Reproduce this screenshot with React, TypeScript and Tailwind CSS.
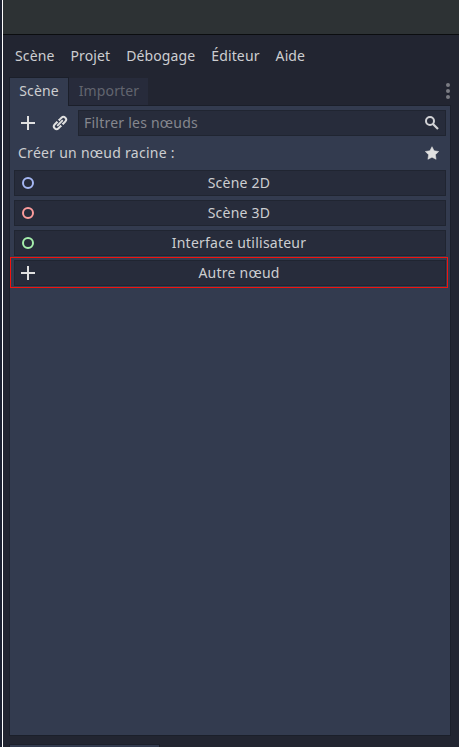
import React from "react";

const menus = ["Scène", "Projet", "Débogage", "Éditeur", "Aide"];

function Plus() {
  return (
    <svg width="16" height="16" viewBox="0 0 16 16" className="shrink-0">
      <path d="M7 1h2v6h6v2H9v6H7V9H1V7h6z" fill="#e0e0e0" />
    </svg>
  );
}

function Link() {
  return (
    <svg width="16" height="16" viewBox="0 0 16 16" className="shrink-0" fill="none" stroke="#e0e0e0" strokeWidth="2">
      <g transform="rotate(-45 8 8)">
        <path d="M6.6 10.7H3.2a2.7 2.7 0 0 1 0-5.4h3.4M9.4 5.3h3.4a2.7 2.7 0 0 1 0 5.4H9.4" />
        <path d="M6.6 4.3v2.2M6.6 9.5v2.2M9.4 4.3v2.2M9.4 9.5v2.2" strokeWidth="1" />
        <path d="M4.8 8h6.4" strokeLinecap="round" strokeWidth="1.8" />
      </g>
    </svg>
  );
}

function Search() {
  return (
    <svg width="16" height="16" viewBox="0 0 16 16" className="shrink-0" fill="none" stroke="#d2d3d6" strokeWidth="2">
      <circle cx="6" cy="6" r="4" />
      <path d="M9 9l5 5" strokeWidth="2.2" />
    </svg>
  );
}

function Star() {
  return (
    <svg width="16" height="16" viewBox="0 0 16 16" className="shrink-0">
      <path d="M8 1.7l2.1 4 4.6.8-3.3 3.2.7 4.6L8 12.3l-4.1 2 .7-4.6-3.3-3.2 4.6-.8z" fill="#e0e0e0" stroke="#e0e0e0" strokeWidth="0.5" strokeLinejoin="round" />
    </svg>
  );
}

function Ring({ color }: { color: string }) {
  return (
    <svg width="16" height="16" viewBox="0 0 16 16" className="shrink-0">
      <circle cx="8" cy="8" r="5" fill="none" stroke={color} strokeWidth="2" />
    </svg>
  );
}

function NodeButton({ icon, label }: { icon: React.ReactNode; label: string }) {
  return (
    <button className="flex h-[26px] w-full items-center border border-[#202531] bg-[#272c3b] pl-[5px] tracking-[0.24px] text-[#cdced1]">
      {icon}
      <span className="grow pr-[3px] text-center leading-5">{label}</span>
    </button>
  );
}

export default function App() {
  return (
    <div className="flex h-[747px] w-[459px] overflow-hidden bg-[#222531] font-['Noto_Sans',sans-serif] text-[14px] leading-5 text-[#cdced1]">
      <div className="w-[3px] shrink-0 border-r border-white bg-[#1c2131]" />
      <div className="flex min-w-0 grow flex-col">
        <div className="h-[35px] shrink-0 border-b border-[#0b0d0f] bg-[#2d3234]" />
        <nav className="flex h-[42px] shrink-0 items-center gap-4 pl-3 tracking-[0.12px]">
          {menus.map((m) => (
            <span key={m}>{m}</span>
          ))}
        </nav>
        <div className="flex h-[28px] shrink-0 pl-[6px] tracking-[0.14px]">
          <div className="relative z-10 h-[29px] w-[60px] border border-b-0 border-[#1b1f2a] bg-[#333b4f] pt-[3px] text-center">Scène</div>
          <div className="mt-px h-[27px] w-[79px] bg-[#272b3b] pl-px pt-[3px] text-center text-[#62656f]">Importer</div>
          <div className="ml-auto mr-[9px] flex flex-col gap-[2px] pt-[6px]">
            <i className="size-1 rounded-full bg-[#7b7d84]" />
            <i className="size-1 rounded-full bg-[#7b7d84]" />
            <i className="size-1 rounded-full bg-[#7b7d84]" />
          </div>
        </div>
        <main className="ml-[6px] flex h-[631px] w-[442px] shrink-0 flex-col border border-[#1b1f2a] bg-[#333b4f] px-1 pt-1">
          <div className="flex h-[26px] shrink-0 items-center">
            <div className="flex w-[64px] gap-4 pl-[6px]">
              <Plus />
              <Link />
            </div>
            <div className="flex h-[26px] grow items-center justify-between border border-[#202531] bg-[#272c3b] pl-[5px] pr-[5px] tracking-[0.23px] text-[#85878e]">
              <span>Filtrer les nœuds</span>
              <Search />
            </div>
          </div>
          <div className="flex h-[34px] shrink-0 items-center justify-between pl-1 pr-[6px] tracking-[0.27px]">
            <span>Créer un nœud racine :</span>
            <Star />
          </div>
          <div className="flex flex-col gap-1">
            <NodeButton icon={<Ring color="#a5b7f3" />} label="Scène 2D" />
            <NodeButton icon={<Ring color="#fc9c9c" />} label="Scène 3D" />
            <NodeButton icon={<Ring color="#a5efac" />} label="Interface utilisateur" />
            <div className="relative">
              <NodeButton icon={<Plus />} label="Autre nœud" />
              <div className="pointer-events-none absolute -left-1 -top-[3px] h-[31px] w-[438px] border border-[#f3130d]" />
            </div>
          </div>
        </main>
        <div className="ml-[6px] mt-2 h-[3px] w-[151px] shrink-0 border border-b-0 border-[#1b1f2a] bg-[#333b4f]" />
      </div>
    </div>
  );
}
